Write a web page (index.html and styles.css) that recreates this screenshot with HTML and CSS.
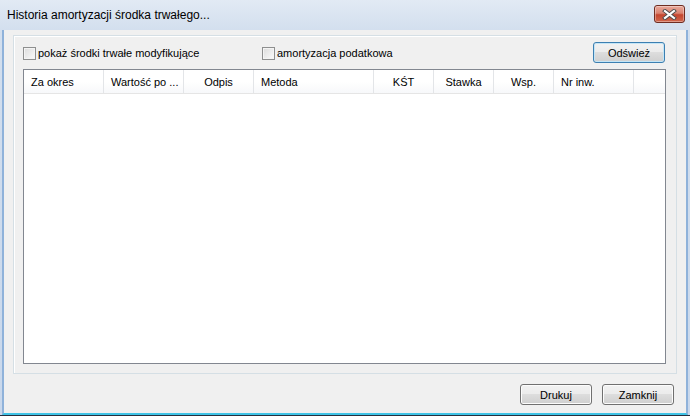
FILE: index.html
```html
<!DOCTYPE html>
<html lang="pl">
<head>
    <meta charset="UTF-8">
    <title>Historia amortyzacji środka trwałego...</title>
    <link rel="stylesheet" href="styles.css">
</head>
<body>
    <div class="window">
        <div class="titlebar">
            <span class="title">Historia amortyzacji środka trwałego...</span>
            <button class="close-btn" title="Zamknij">
                <svg width="15" height="11" viewBox="0 0 15 11">
                    <path d="M3 2 L12 9 M12 2 L3 9" stroke="#4a4a4a" stroke-width="4" stroke-linecap="square"/>
                    <path d="M3 2 L12 9 M12 2 L3 9" stroke="#ffffff" stroke-width="2.2" stroke-linecap="square"/>
                </svg>
            </button>
        </div>

        <div class="client">
            <div class="panel">
                <div class="toolbar">
                    <label class="check check-wide"><span class="box"></span>pokaż środki trwałe modyfikujące</label>
                    <label class="check"><span class="box"></span>amortyzacja podatkowa</label>
                    <button class="btn btn-default refresh">Odśwież</button>
                </div>

                <div class="grid">
                    <div class="grid-header">
                        <div class="col w80">Za okres</div>
                        <div class="col w80">Wartość po ...</div>
                        <div class="col w70 center">Odpis</div>
                        <div class="col w120">Metoda</div>
                        <div class="col w60 center">KŚT</div>
                        <div class="col w60 center">Stawka</div>
                        <div class="col w60 center">Wsp.</div>
                        <div class="col w80">Nr inw.</div>
                        <div class="col fill"></div>
                    </div>
                    <div class="grid-body"></div>
                </div>
            </div>

            <div class="footer">
                <button class="btn">Drukuj</button>
                <button class="btn">Zamknij</button>
            </div>
        </div>
    </div>
</body>
</html>
```

FILE: styles.css
```css
/* reset */
* {
    margin: 0;
    padding: 0;
    box-sizing: border-box;
}

body {
    font-family: 'Liberation Sans', Arial, sans-serif;
    font-size: 11px;
    color: #000;
    background: #fff;
}

/* okno */
.window {
    width: 690px;
    height: 416px;
    display: flex;
    flex-direction: column;
    padding: 0 2px 0 2px;
    background: linear-gradient(#e2eaf4, #d3dfee 30px, #c9d8ec);
    border-bottom: 1px solid #25303f;
}

/* pasek tytułu */
.titlebar {
    height: 30px;
    display: flex;
    align-items: center;
    padding-left: 5px;
    flex-shrink: 0;
}

.title {
    font-size: 12px;
    color: #000;
}

.close-btn {
    margin-left: auto;
    margin-right: 3px;
    align-self: flex-start;
    margin-top: 5px;
    width: 31px;
    height: 18px;
    border: 1px solid #6e2d22;
    border-radius: 3px;
    background: linear-gradient(#e9a99c, #d98371 45%, #c4462f 55%, #d0674d);
    box-shadow: inset 0 0 0 1px rgba(255,255,255,0.35);
    display: flex;
    align-items: center;
    justify-content: center;
}

/* obszar klienta */
.client {
    flex: 1;
    display: flex;
    flex-direction: column;
    background: #f0f0f0;
    border-left: 2px solid #8fb2da;
    border-right: 2px solid #8fb2da;
    border-bottom: 2px solid #3fc3e6;
}

/* panel z siatką */
.panel {
    margin: 5px 9px 0 9px;
    height: 339px;
    border: 1px solid #d5dfe5;
    box-shadow: inset 1px 1px 0 #fff;
    padding: 6px 10px 9px 9px;
    display: flex;
    flex-direction: column;
}

.toolbar {
    display: flex;
    align-items: center;
    height: 21px;
}

.check {
    display: flex;
    align-items: center;
    gap: 2px;
    margin-top: 1px;
}

.check-wide {
    width: 239px;
}

.box {
    width: 13px;
    height: 13px;
    border: 1px solid #8e8f8f;
    background: linear-gradient(135deg, #dcdcdc, #fbfbfb);
    box-shadow: inset 0 0 0 1px #f4f4f4;
}

/* przyciski */
.btn {
    width: 72px;
    height: 21px;
    font-family: 'Liberation Sans', Arial, sans-serif;
    font-size: 11px;
    color: #000;
    border: 1px solid #707070;
    border-radius: 3px;
    background: linear-gradient(#f2f2f2, #ebebeb 50%, #dddddd 50%, #cfcfcf);
    box-shadow: inset 0 0 0 1px #fcfcfc;
}

.btn-default {
    border-color: #3c7fb1;
    box-shadow: inset 0 0 0 1px #c4e5f6;
}

.refresh {
    margin-left: auto;
    margin-right: 1px;
}

/* siatka */
.grid {
    margin-top: 6px;
    flex: 1;
    border: 1px solid #828790;
    background: #fff;
    display: flex;
    flex-direction: column;
}

.grid-header {
    display: flex;
    height: 24px;
    border-bottom: 1px solid #e5e5e5;
    background: linear-gradient(#ffffff, #ffffff 50%, #f7f8fa);
}

.col {
    border-right: 1px solid #e3e5e8;
    padding-left: 7px;
    display: flex;
    align-items: center;
    white-space: nowrap;
}

.col.center {
    justify-content: center;
    padding-left: 0;
}

.w60 { width: 60px; }
.w70 { width: 70px; }
.w80 { width: 80px; }
.w120 { width: 120px; }

.col.fill {
    flex: 1;
    border-right: none;
}

.grid-body {
    flex: 1;
}

/* stopka */
.footer {
    display: flex;
    justify-content: flex-end;
    gap: 10px;
    margin-top: 10px;
    padding-right: 12px;
}
```
